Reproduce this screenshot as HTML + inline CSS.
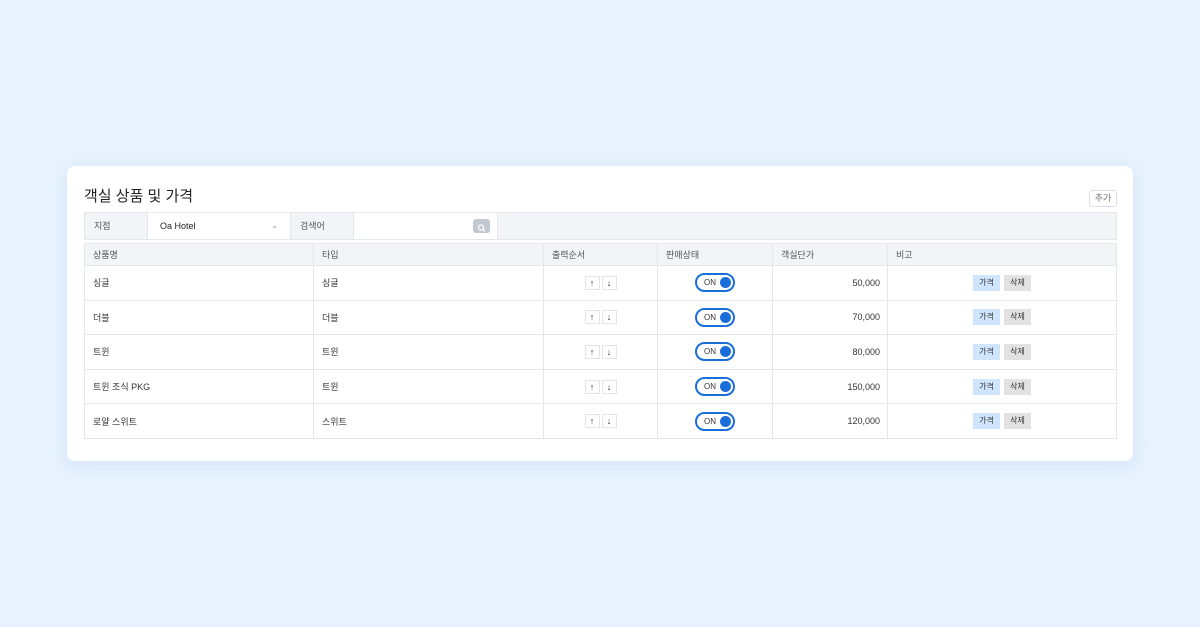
<!DOCTYPE html>
<html><head><meta charset="utf-8"><style>
*{box-sizing:border-box;margin:0;padding:0}
body{width:1200px;height:627px;background:#e8f2fe;font-family:"Liberation Sans","Noto Sans CJK KR",sans-serif;position:relative;overflow:hidden;color:#333}
.card{position:absolute;left:67px;top:166px;width:1066px;height:295px;background:#fff;border-radius:8px;box-shadow:0 4px 18px rgba(120,160,210,.18)}
h1{position:absolute;left:17px;top:19px;font-size:15px;font-weight:normal;color:#222}
.add{position:absolute;left:1022px;top:24px;width:28px;height:17px;border:1px solid #dde;border-radius:3px;font-size:9px;color:#777;text-align:center;line-height:15px;background:#fff}
.filter{position:absolute;left:17px;top:46px;width:1033px;height:28px;border:1px solid #e4e7ec;background:#f3f4f7;display:flex;font-size:9px}
.filter div{height:100%;line-height:26px;padding-left:9px}
.w{background:#fff;border-left:1px solid #e4e7ec;border-right:1px solid #e4e7ec;position:relative}
table{position:absolute;left:17px;top:77px;border-collapse:collapse;font-size:9px}
td,th{border:1px solid #e4e7ec;height:34.6px;padding:0 8px;font-weight:normal;text-align:left}
th{height:22px;background:#f3f4f7;color:#555}
.c{text-align:center}.r{text-align:right;padding-right:7px}
.ar{display:inline-block;width:15px;height:14px;border:1px solid #e4e4e4;font-size:9px;font-weight:bold;line-height:12px;text-align:center;margin:0 1px;color:#333}
.tg{display:inline-block;width:40px;height:19px;border:2px solid #1a6ed8;border-radius:10px;position:relative;vertical-align:middle;font-size:8px;line-height:15px;padding-left:7px;text-align:left}
.tg:after{content:"";position:absolute;right:2px;top:2px;width:11px;height:11px;border-radius:50%;background:#1a6ed8}
.b1,.b2{display:inline-block;width:27px;height:16px;line-height:16px;text-align:center;font-size:8px;margin:0 2px}
.b1{background:#cfe5fd}.b2{background:#e2e2e2}
</style></head><body>
<div class="card">
<h1>객실 상품 및 가격</h1>
<div class="add">추가</div>
<div class="filter">
<div style="width:62px;color:#555">지점</div>
<div class="w" style="width:144px;padding-left:12px;color:#222">Oa Hotel<span style="position:absolute;right:12px;color:#999;font-size:8px">⌄</span></div>
<div style="width:62px;color:#555">검색어</div>
<div class="w" style="width:145px"><span style="position:absolute;right:7px;top:6px;width:17px;height:14px;background:#c2c7d2;border-radius:3px;padding:0;display:block"><svg width="17" height="14" viewBox="0 0 17 14"><circle cx="8" cy="6.5" r="2.6" fill="none" stroke="#fff" stroke-width="1.3"/><path d="M10 8.5l2 2" stroke="#fff" stroke-width="1.4"/></svg></span></div>
</div>
<table>
<tr><th style="width:229px">상품명</th><th style="width:230px">타입</th><th style="width:114px">출력순서</th><th style="width:115px">판매상태</th><th style="width:115px">객실단가</th><th style="width:229px">비고</th></tr>
<tr><td>싱글</td><td>싱글</td><td class="c"><span class="ar">↑</span><span class="ar">↓</span></td><td class="c"><span class="tg">ON</span></td><td class="r">50,000</td><td class="c"><span class="b1">가격</span><span class="b2">삭제</span></td></tr>
<tr><td>더블</td><td>더블</td><td class="c"><span class="ar">↑</span><span class="ar">↓</span></td><td class="c"><span class="tg">ON</span></td><td class="r">70,000</td><td class="c"><span class="b1">가격</span><span class="b2">삭제</span></td></tr>
<tr><td>트윈</td><td>트윈</td><td class="c"><span class="ar">↑</span><span class="ar">↓</span></td><td class="c"><span class="tg">ON</span></td><td class="r">80,000</td><td class="c"><span class="b1">가격</span><span class="b2">삭제</span></td></tr>
<tr><td>트윈 조식 PKG</td><td>트윈</td><td class="c"><span class="ar">↑</span><span class="ar">↓</span></td><td class="c"><span class="tg">ON</span></td><td class="r">150,000</td><td class="c"><span class="b1">가격</span><span class="b2">삭제</span></td></tr>
<tr><td>로얄 스위트</td><td>스위트</td><td class="c"><span class="ar">↑</span><span class="ar">↓</span></td><td class="c"><span class="tg">ON</span></td><td class="r">120,000</td><td class="c"><span class="b1">가격</span><span class="b2">삭제</span></td></tr>
</table>
</div>
</body></html>
